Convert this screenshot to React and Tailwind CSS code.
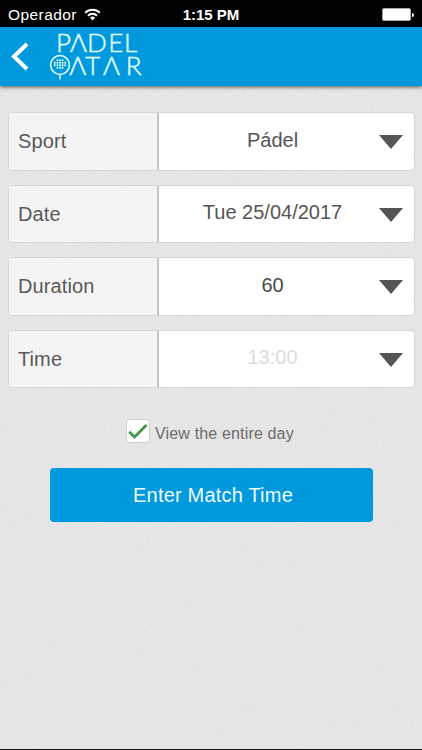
import React from "react";

const rows = [
  { label: "Sport", value: "Pádel", tone: "text-[#555]" },
  { label: "Date", value: "Tue 25/04/2017", tone: "text-[#555]" },
  { label: "Duration", value: "60", tone: "text-[#4a4a4a]" },
  { label: "Time", value: "13:00", tone: "text-[#dcdcdc]" },
];

function StatusBar() {
  return (
    <div className="flex h-[27px] shrink-0 items-center bg-[#030303] pt-[2px] text-white">
      <div className="flex flex-1 items-center gap-[7px] pl-[8px]">
        <span className="text-[15.5px] leading-none tracking-[0.42px]">Operador</span>
        <svg width="17" height="13" viewBox="0 0 17 13" fill="none" stroke="white" strokeWidth="2">
          <path d="M1.2 4.8a10.4 10.4 0 0 1 14.6 0" />
          <path d="M4 7.7a6.4 6.4 0 0 1 9 0" />
          <path d="M8.5 12.4 6 9.8a3.6 3.6 0 0 1 5 0z" fill="white" stroke="none" />
        </svg>
      </div>
      <span className="text-[15px] font-bold leading-none">1:15 PM</span>
      <div className="flex flex-1 items-center justify-end gap-px pr-[8px]">
        <div className="h-[13px] w-[29px] rounded-[2px] border border-[#aaa] bg-white" />
        <div className="h-[4px] w-[2px] rounded-r bg-white" />
      </div>
    </div>
  );
}

const dotRows = [
  { y: 60.2, xs: [57.4, 60, 62.6] },
  { y: 62.7, xs: [54.8, 57.4, 60, 62.6, 65.2] },
  { y: 65.2, xs: [54.8, 57.4, 60, 62.6, 65.2] },
  { y: 67.7, xs: [57.4, 60, 62.6] },
];

function Logo() {
  return (
    <svg className="overflow-visible" width="98" height="52" viewBox="48 30 98 52" fill="#e4ffff" role="img" aria-label="Padel Qatar">
      <g fontFamily="Lato, sans-serif" fontWeight="300" fontSize="26" stroke="#e4ffff" strokeWidth="0.45">
        <text y="51.5" x="56 70 87 108.3 124">PΛDEL</text>
        <text y="75.2" x="69.3 85.3 103 125.8">ΛTΛR</text>
      </g>
      <circle cx="60" cy="65" r="9.4" fill="none" stroke="#e4ffff" strokeWidth="1.5" />
      <path d="M60 74.4v5" stroke="#e4ffff" strokeWidth="1.5" />
      {dotRows.map((row) =>
        row.xs.map((x) => <circle key={`${x}-${row.y}`} cx={x} cy={row.y} r="1.05" />)
      )}
    </svg>
  );
}

function Header() {
  return (
    <header className="z-10 flex h-[58.5px] shrink-0 bg-[#0099dd] shadow-[0_1px_4px_rgba(0,0,0,0.65)]">
      <svg className="ml-[10px] mt-[15px]" width="20" height="29" viewBox="0 0 20 29" fill="none" stroke="white" strokeWidth="4">
        <path d="M17 2 4 14.5 17 27" />
      </svg>
      <div className="ml-[18px] mt-[3px]">
        <Logo />
      </div>
    </header>
  );
}

function Row({ label, value, tone }) {
  return (
    <div className="flex h-[58.5px] overflow-hidden rounded-[4px] border border-[#d4d6d8] bg-white text-[20px]">
      <div className="flex w-[150px] shrink-0 items-center border-r-2 border-[#bcc6cf] bg-[#f4f4f4] pl-[9.5px] tracking-[0.1px] text-[#595959]">
        {label}
      </div>
      <div className={`flex flex-1 items-center justify-center pb-[3px] pl-[7px] ${tone}`}>{value}</div>
      <div className="flex w-[34px] shrink-0 items-center pt-[2px]">
        <svg className="-ml-px" width="24" height="14" viewBox="0 0 24 14" fill="#555">
          <path d="M0 0h24L12 14z" />
        </svg>
      </div>
    </div>
  );
}

export default function App() {
  return (
    <div className="relative flex h-[750px] w-[422px] flex-col overflow-hidden border-b border-[#111] bg-[#e7e7e7] font-['Liberation_Sans',sans-serif]">
      <svg className="absolute inset-0 opacity-[0.07]" width="422" height="750" aria-hidden="true">
        <filter id="paper">
          <feTurbulence type="fractalNoise" baseFrequency="0.28" numOctaves="2" />
          <feColorMatrix type="saturate" values="0" />
        </filter>
        <rect width="422" height="750" filter="url(#paper)" />
      </svg>
      <div className="relative flex flex-1 flex-col">
        <StatusBar />
        <Header />
        <main className="flex flex-col px-[7.5px] pt-[26.5px]">
          <div className="flex flex-col gap-[14px]">
            {rows.map((row) => (
              <Row key={row.label} {...row} />
            ))}
          </div>
          <label className="ml-[118.5px] mt-[31px] flex items-center gap-[5px]">
            <span className="flex h-[24px] w-[24px] items-center justify-center rounded-[4px] border border-[#d0d0d0] bg-white">
              <svg width="20" height="17" viewBox="0 0 20 17" fill="none" stroke="#41984b" strokeWidth="2.8">
                <path d="M1.2 8.7 6.5 14 18.5 2" />
              </svg>
            </span>
            <span className="pt-[5px] text-[16px] leading-none tracking-[0.16px] text-[#6c6c6c]">View the entire day</span>
          </label>
          <button className="ml-[42.5px] mt-[25px] h-[54px] w-[323px] rounded-[4px] bg-[#0099dd] pl-[3px] text-[20px] tracking-[0.2px] text-[#eefcff]">
            Enter Match Time
          </button>
        </main>
      </div>
    </div>
  );
}
